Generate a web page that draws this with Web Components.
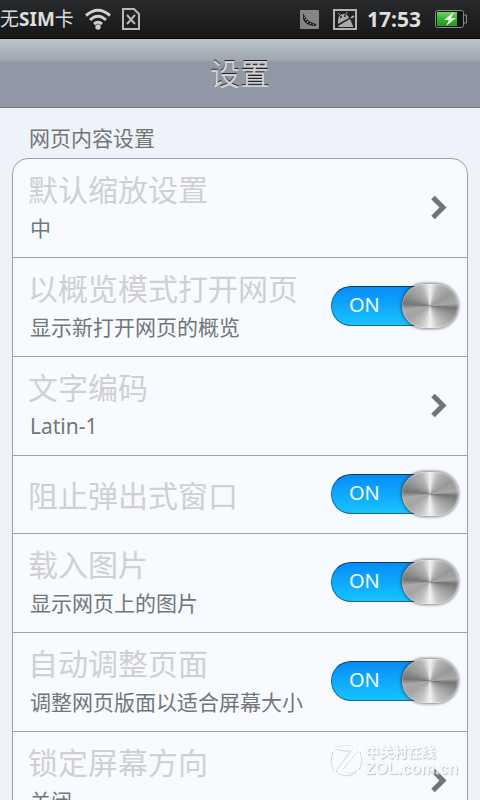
<!DOCTYPE html>
<html lang="zh-CN">
<head>
<meta charset="utf-8">
<meta name="viewport" content="width=device-width, initial-scale=1">
<title>设置</title>
<style>
  html, body { margin: 0; height: 100%; }
  body { background: #edf3f8; color: #737578; font-family: "Noto Sans", "Noto Sans CJK SC", sans-serif; overflow: hidden; }
</style>
</head>
<body>
<settings-app>
  <status-bar slot="status" carrier="无SIM卡" time="17:53"></status-bar>
  <title-bar slot="title">设置</title-bar>
  <settings-group heading="网页内容设置">
    <setting-link label="默认缩放设置">中</setting-link>
    <setting-switch label="以概览模式打开网页">显示新打开网页的概览</setting-switch>
    <setting-link label="文字编码">Latin-1</setting-link>
    <setting-switch label="阻止弹出式窗口"></setting-switch>
    <setting-switch label="载入图片">显示网页上的图片</setting-switch>
    <setting-switch label="自动调整页面">调整网页版面以适合屏幕大小</setting-switch>
    <setting-link label="锁定屏幕方向">关闭</setting-link>
  </settings-group>
  <site-watermark slot="overlay"></site-watermark>
</settings-app>

<script>
const define = (name, html, setup) => {
  const template = document.createElement('template');
  template.innerHTML = html;
  customElements.define(name, class extends HTMLElement {
    constructor() {
      super();
      this.attachShadow({ mode: 'open' }).append(template.content.cloneNode(true));
    }
    connectedCallback() { if (setup) setup(this, this.shadowRoot); }
  });
};

define('settings-app', `
  <style>
    :host { display: flex; flex-direction: column; height: 100vh; position: relative; }
    main { flex: 1; min-height: 0; overflow-y: auto; scrollbar-width: none; padding: 20px 12px; box-sizing: border-box; background: #edf3f8; }
    slot[name=overlay]::slotted(*) { position: absolute; right: 22px; bottom: 22px; }
  </style>
  <slot name="status"></slot>
  <slot name="title"></slot>
  <main><slot></slot></main>
  <slot name="overlay"></slot>`);

define('status-bar', `
  <style>
    :host { display: flex; align-items: center; height: 38px; flex: none; background: linear-gradient(#292a2c, #161718); border-bottom: 1px solid #000; color: #dedede; line-height: 38px; padding-right: 13px; }
    svg { display: block; flex: none; }
    .carrier { font-size: 19px; }
    .carrier b { font-weight: 700; }
    .left, .right { display: flex; align-items: center; }
    .left { gap: 10px; flex: 1; }
    .right { gap: 14px; }
    time { font-size: 21px; font-weight: 700; margin-left: -4px; }
  </style>
  <div class="left">
    <span class="carrier"></span>
    <svg width="28" height="24" viewBox="0 0 28 24" fill="none" stroke="#cfcfcf" stroke-width="3">
      <path d="M2 8.500Q14 -2 26 8.500M6 13Q14 5.500 22 13M10 17Q14 13.500 18 17"/><circle cx="14" cy="20" r="2.700" fill="#cfcfcf" stroke="none"/>
    </svg>
    <svg width="18" height="22" viewBox="0 0 18 22" fill="none" stroke="#b8b8b8" stroke-width="2">
      <path d="M1 1H12L17 6V21H1Z"/><path d="M5 7L13 16M13 7L5 16"/>
    </svg>
  </div>
  <div class="right">
    <svg width="19" height="19" viewBox="0 0 19 19">
      <rect width="19" height="19" rx="1" fill="#858585"/>
      <path d="M3 3Q4 5 6 8Q9 12 16 14Q17 16 14 16Q5 15 3 9Z" fill="#222"/>
      <path d="M4 8L5 7M5 10L7 9M7 13L8 11M10 14L11 13M13 15L14 14" stroke="#999" fill="none"/>
    </svg>
    <svg width="24" height="21" viewBox="0 0 24 21">
      <rect x="1" y="1" width="22" height="19" fill="#202122" stroke="#b2b2b2" stroke-width="2"/>
      <path d="M5 12Q5 6 10 5Q15 5 16 9L5 15Z" fill="#aaa"/>
      <path d="M7 6L5 4M13 5L14 3" stroke="#aaa"/>
      <circle cx="8" cy="8" r="1" fill="#222"/><circle cx="12" cy="7" r="1" fill="#222"/>
      <path d="M5 17L17 10L20 17V18H6Z" fill="#aaa"/><path d="M18 9L21 7" stroke="#aaa" stroke-width="2"/>
    </svg>
    <time></time>
    <svg width="32" height="18" viewBox="0 0 32 18">
      <defs><linearGradient id="charge" x2="0" y2="1"><stop stop-color="#7bd06b"/><stop offset=".5" stop-color="#35b32c"/><stop offset="1" stop-color="#249a1d"/></linearGradient></defs>
      <rect x=".5" y=".5" width="28" height="17" rx="2" fill="#141515" stroke="#898989"/>
      <path d="M29 5H31.500V13H29" fill="none" stroke="#898989"/>
      <rect x="2" y="2" width="20" height="14" fill="url(#charge)"/>
      <path d="M19 2L9 10H14L11 16L21 8H16Z" fill="#f2fff0"/>
    </svg>
  </div>`, (el, root) => {
    const [, before, latin, after] = el.getAttribute('carrier').match(/^([^A-Z]*)([A-Z]*)(.*)$/);
    const bold = document.createElement('b');
    bold.textContent = latin;
    root.querySelector('.carrier').replaceChildren(before, bold, after);
    root.querySelector('time').textContent = el.getAttribute('time');
  });

define('title-bar', `
  <style>
    :host { display: block; flex: none; height: 68px; border-bottom: 1px solid #6c7883; background: linear-gradient(#bcc4ca, #9da6ae 22px, #8f98a4 23px, #8f98a4); }
    h1 { margin: 0; font-size: 30px; font-weight: 400; line-height: 70px; text-align: center; color: #d3d1d0; text-shadow: 0 -1px 0 #222; }
  </style>
  <h1><slot></slot></h1>`);

define('settings-group', `
  <style>
    :host { display: block; }
    h2 { margin: 0; padding: 0 17px; font-size: 21px; font-weight: 400; line-height: 20px; padding-bottom: 10px; }
    .card { border: 1px solid #9ca2a8; border-radius: 16px; background: #f7faff; overflow: hidden; }
    ::slotted(:not(:last-child)) { border-bottom: 1px solid #9ca2a8; }
  </style>
  <section><h2></h2><div class="card"><slot></slot></div></section>`, (el, root) => {
    root.querySelector('h2').textContent = el.getAttribute('heading');
  });

const rowStyle = `
    :host { display: block; }
    .row { all: unset; box-sizing: border-box; display: flex; align-items: center; justify-content: space-between; width: 100%; cursor: pointer; white-space: nowrap; }
    .text { display: flex; flex-direction: column; padding: 11px 0 9px 15px; }
    .single .text { padding: 20px 0 18px 15px; }
    .name { font-size: 30px; line-height: 39px; color: #d0d0d1; }
    .note { font-size: 21px; line-height: 39px; padding-left: 2px; }
    .single .note { display: none; }`;

const fillRow = (el, root) => {
  root.querySelector('.name').textContent = el.getAttribute('label');
  root.querySelector('.row').classList.toggle('single', !el.textContent.trim());
};

define('setting-link', `
  <style>${rowStyle}
    svg { display: block; margin-right: 20px; }
  </style>
  <button class="row" type="button">
    <span class="text"><span class="name"></span><span class="note"><slot></slot></span></span>
    <svg width="16" height="26" viewBox="0 0 16 26" fill="none" stroke="#707377" stroke-width="5"><path d="M2 2.500L12 12.500L2 22.500"/></svg>
  </button>`, fillRow);

define('setting-switch', `
  <style>${rowStyle}
    toggle-face { margin-right: 9px; }
  </style>
  <label class="row">
    <span class="text"><span class="name"></span><span class="note"><slot></slot></span></span>
    <toggle-face><input type="checkbox" role="switch" checked></toggle-face>
  </label>`, fillRow);

define('toggle-face', `
  <style>
    :host { display: block; position: relative; width: 127px; height: 46px; flex: none; }
    .track { box-sizing: border-box; height: 40px; margin: 2px 4px 4px 0; border: 1px solid #27648c; border-top-color: #123a5c; border-radius: 20px; background: linear-gradient(#078cf8, #16c4ff); color: #f4fbff; font-size: 20px; line-height: 36px; padding-left: 17px; }
    .knob { position: absolute; right: 0; top: 0; width: 56px; height: 44px; border-radius: 22px; box-shadow: 0 0 3px 1px #0007, inset 0 0 2px #fff9;
      background: conic-gradient(#f2f2f2, #b4b4b4 25deg, #999 60deg, #a8a8a8 84deg, #757575 94deg, #999 115deg, #c4c4c4 155deg, #f2f2f2 180deg, #c4c4c4 205deg, #a4a4a4 240deg, #aaa 262deg, #757575 275deg, #979797 300deg, #b4b4b4 335deg, #f2f2f2); }
    ::slotted(input) { position: absolute; inset: 0; margin: 0; opacity: 0; }
  </style>
  <div class="track">ON</div><div class="knob"></div><slot></slot>`);

define('site-watermark', `
  <style>
    :host { display: flex; align-items: center; gap: 3px; pointer-events: none; opacity: .8; color: #fbfcff; font-family: "Liberation Sans", "Noto Sans CJK SC", sans-serif; font-weight: 700; text-shadow: 1px 1px 1px #b4b8bf, 0 0 1px #d0d3d9; }
    svg { display: block; }
    span { display: block; }
    .cn { font-size: 14px; line-height: 17px; }
    .en { font-size: 16px; line-height: 16px; }
  </style>
  <svg width="33" height="35" viewBox="0 0 33 35" fill="none">
    <path d="M8 4Q16 0 25 4L28 8L12 27Q20 32 27 28Q20 36 9 31L6 28L21 8Q13 9 5 6M3 9Q-1 19 4 28M30 9Q34 19 29 27" stroke="#c9cdd3" stroke-width="1"/>
    <path d="M7 3Q16 -1 24 3L27 7L11 26Q19 31 26 27" stroke="#fcfdff" stroke-width="2"/>
  </svg>
  <div><span class="cn">中关村在线</span><span class="en">ZOL.com.cn</span></div>`);
</script>
</body>
</html>
